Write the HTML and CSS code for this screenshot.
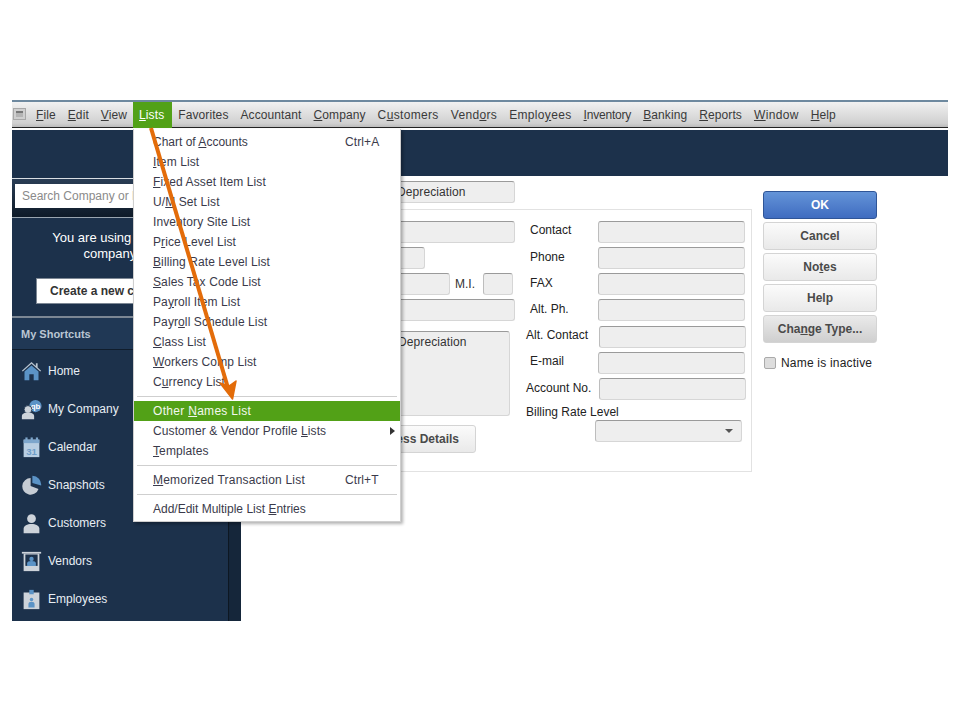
FILE: index.html
```html
<!DOCTYPE html>
<html lang="en">
<head>
<meta charset="utf-8">
<title>Other Names List</title>
<link rel="stylesheet" href="styles.css">
</head>
<body>
<div class="app">
  <div class="menubar">
    <span class="sysicon"><span class="sysicon-inner"></span></span>
    <span class="mi"><u>F</u>ile</span>
    <span class="mi"><u>E</u>dit</span>
    <span class="mi"><u>V</u>iew</span>
    <span class="mi active"><u>L</u>ists</span>
    <span class="mi">Favorites</span>
    <span class="mi">Accountant</span>
    <span class="mi"><u>C</u>ompany</span>
    <span class="mi loose">C<u>u</u>stomers</span>
    <span class="mi loose">Vend<u>o</u>rs</span>
    <span class="mi loose">Emplo<u>y</u>ees</span>
    <span class="mi tight"><u>I</u>nventory</span>
    <span class="mi"><u>B</u>anking</span>
    <span class="mi"><u>R</u>eports</span>
    <span class="mi loose"><u>W</u>indow</span>
    <span class="mi"><u>H</u>elp</span>
  </div>
  <div class="rule"></div>
  <div class="banner"></div>
  <div class="body">
    <aside class="sidebar">
      <div class="searchbar"><div class="search">Search Company or Help</div></div>
      <div class="promo">
        <p class="promo-text">You are using a sample<br>company file</p>
        <div class="promo-btn">Create a new company</div>
      </div>
      <div class="shortcuts-head">My Shortcuts</div>
      <nav class="shortcuts">
        <div class="sc">
          <svg class="ic" viewBox="0 0 24 24"><path d="M1 11 12 1l5 4.600V2.500h2v5l4 3.500-1 1L12 3 2 12z" fill="#b8c4d0"/><path d="M4 12 12 5l8 7v10h-5.500v-7h-5v7H4z" fill="#5b93c6"/></svg>
          <span>Home</span>
        </div>
        <div class="sc">
          <svg class="ic" viewBox="0 0 24 24"><circle cx="16.500" cy="8" r="7" fill="#5b93c6"/><text class="qb" x="16.500" y="11" text-anchor="middle">qb</text><circle cx="8" cy="12" r="4.500" fill="#cdd3da" stroke="#1c314b"/><path d="M1 23v-3.500C1 17 4 15.500 8 15.500s7 1.500 7 4V23z" fill="#cdd3da"/></svg>
          <span>My Company</span>
        </div>
        <div class="sc">
          <svg class="ic" viewBox="0 0 24 24"><rect x="3" y="3" width="18" height="20" fill="#b9cee2"/><rect x="3" y="3" width="18" height="4" fill="#7ea6cc"/><rect x="5" y="0.500" width="2.500" height="5" fill="#7ea6cc"/><rect x="11" y="0.500" width="2.500" height="5" fill="#7ea6cc"/><rect x="17" y="0.500" width="2.500" height="5" fill="#7ea6cc"/><text class="cal" x="12" y="20.500" text-anchor="middle">31</text></svg>
          <span>Calendar</span>
        </div>
        <div class="sc">
          <svg class="ic" viewBox="0 0 24 24"><path d="M11 3.500a9.500 9.500 0 1 0 9 12.500l-9-3.500z" fill="#c6ccd4"/><path d="M13 1a10 10 0 0 1 10 11l-10-3z" fill="#5b93c6"/></svg>
          <span>Snapshots</span>
        </div>
        <div class="sc">
          <svg class="ic" viewBox="0 0 24 24"><circle cx="12" cy="6.500" r="5" fill="#cdd3da"/><path d="M3 23v-5c0-3.500 4-5.500 9-5.500s9 2 9 5.500v5z" fill="#cdd3da"/></svg>
          <span>Customers</span>
        </div>
        <div class="sc">
          <svg class="ic" viewBox="0 0 24 24"><rect x="1" y="1" width="22" height="2" fill="#cdd3da"/><rect x="3" y="3" width="18" height="20" fill="#cdd3da"/><rect x="5" y="4" width="14" height="13" fill="#1c314b"/><circle cx="12" cy="9" r="2.500" fill="#5b93c6"/><path d="M7 17v-3c0-1.500 2-2.500 5-2.500s5 1 5 2.500v3z" fill="#5b93c6"/></svg>
          <span>Vendors</span>
        </div>
        <div class="sc">
          <svg class="ic" viewBox="0 0 24 24"><rect x="3" y="4" width="18" height="19" fill="#cdd3da"/><rect x="9.500" y="1" width="5" height="5" fill="#5b93c6"/><circle cx="12" cy="12" r="2" fill="#5b93c6"/><path d="M8.500 21v-4c0-1.500 1.500-2.500 3.500-2.500s3.500 1 3.500 2.500v4z" fill="#5b93c6"/></svg>
          <span>Employees</span>
        </div>
      </nav>
    </aside>
    <div class="strip"></div>
    <main class="main">
      <div class="form-area">
        <div class="type-field field">Depreciation</div>
        <section class="panel">
          <div class="col-left">
            <div class="field w-full"></div>
            <div class="field w-short"></div>
            <div class="name-row">
              <div class="field w-first"></div>
              <span class="mi-label">M.I.</span>
              <div class="field w-mi"></div>
            </div>
            <div class="field w-full"></div>
            <div class="field address">Depreciation</div>
            <div class="btn addr-btn">Address Details</div>
          </div>
          <div class="col-right">
            <div class="row"><label class="lb indent up">Contact</label><div class="field grow"></div></div>
            <div class="row"><label class="lb indent">Phone</label><div class="field grow"></div></div>
            <div class="row"><label class="lb indent">FAX</label><div class="field grow"></div></div>
            <div class="row"><label class="lb indent">Alt. Ph.</label><div class="field grow"></div></div>
            <div class="row row-alt"><label class="lb wide up">Alt. Contact</label><div class="field grow"></div></div>
            <div class="row row-back"><label class="lb indent up">E-mail</label><div class="field grow"></div></div>
            <div class="row"><label class="lb wide">Account No.</label><div class="field grow"></div></div>
            <div class="rate-label">Billing Rate Level</div>
            <div class="field dropdown"><span class="caret"></span></div>
          </div>
        </section>
      </div>
      <div class="actions">
        <div class="btn primary">OK</div>
        <div class="btn">Cancel</div>
        <div class="btn">No<u>t</u>es</div>
        <div class="btn">Help</div>
        <div class="btn change">Cha<u>n</u>ge Type...</div>
        <div class="inactive"><span class="check"></span>Name is inactive</div>
      </div>
    </main>
  </div>
</div>

<div class="dropmenu">
  <div class="item snug">Chart of <u>A</u>ccounts<span class="key">Ctrl+A</span></div>
  <div class="item"><u>I</u>tem List</div>
  <div class="item"><u>F</u>ixed Asset Item List</div>
  <div class="item">U/<u>M</u> Set List</div>
  <div class="item">Inventory Site List</div>
  <div class="item">P<u>r</u>ice Level List</div>
  <div class="item"><u>B</u>illing Rate Level List</div>
  <div class="item"><u>S</u>ales Tax Code List</div>
  <div class="item">Pa<u>y</u>roll Item List</div>
  <div class="item">Payr<u>o</u>ll Schedule List</div>
  <div class="item"><u>C</u>lass List</div>
  <div class="item"><u>W</u>orkers Comp List</div>
  <div class="item">C<u>u</u>rrency List</div>
  <div class="sep"></div>
  <div class="item hot">Other <u>N</u>ames List</div>
  <div class="item">Customer &amp; Vendor Profile <u>L</u>ists<span class="sub"></span></div>
  <div class="item"><u>T</u>emplates</div>
  <div class="sep"></div>
  <div class="item airy"><u>M</u>emorized Transaction List<span class="key">Ctrl+T</span></div>
  <div class="sep"></div>
  <div class="item snug">Add/Edit Multiple List <u>E</u>ntries</div>
</div>

<svg class="arrow" viewBox="0 0 960 720" aria-hidden="true">
  <path d="M151 128 228 388" fill="none" stroke="#e36c0a" stroke-width="4"/>
  <path d="M220 383 232.500 399 236 381 229 386z" fill="#e36c0a" stroke="#e36c0a" stroke-width="1.500" stroke-linejoin="round"/>
</svg>
</body>
</html>
```
FILE: styles.css
```css
* { box-sizing: border-box; }
html, body { margin: 0; padding: 0; background: #fff; }
body {
  width: 960px;
  height: 720px;
  overflow: hidden;
  position: relative;
  font-family: "Liberation Sans", Arial, sans-serif;
  font-size: 12px;
  color: #333;
}
.app {
  margin: 100px 0 0 12px;
  width: 936px;
  height: 521px;
  display: flex;
  flex-direction: column;
}
.menubar {
  height: 28px;
  flex: none;
  display: flex;
  align-items: flex-start;
  border-top: 2px solid #6e899f;
  border-bottom: 1px solid #222;
  background: linear-gradient(#f1f1f1, #d0d0d0 85%, #bcbcbc);
  padding-left: 18px;
  position: relative;
}
.sysicon {
  position: absolute;
  left: 1px;
  top: 6px;
  width: 13px;
  height: 12px;
  background: #cfcfcf;
  border: 1px solid #a8a8a8;
  padding: 2px;
}
.sysicon-inner { display: block; height: 100%; background: #b4b4b4; border-top: 2px solid #777; }
.mi {
  height: 26px;
  padding: 0 6px;
  line-height: 26px;
  color: #3a3a3a;
  white-space: nowrap;
  letter-spacing: 0.1px;
}
.mi.loose { letter-spacing: 0.34px; }
.mi.tight { letter-spacing: -0.2px; }
.mi.active { background: #52a117; color: #fff; padding-right: 8px; }
.rule { height: 2px; flex: none; background: #fff; }
.banner { height: 46px; flex: none; background: #1c314b; }
.body { flex: 1; display: flex; min-height: 0; }

.sidebar { width: 216px; flex: none; background: #1c314b; display: flex; flex-direction: column; }
.searchbar {
  height: 40px;
  flex: none;
  margin-top: 2px;
  border-top: 1px solid #d8dde2;
  border-bottom: 1px solid #9aa5b0;
  background: linear-gradient(#2a3d55, #0e1a28);
  padding: 5px 0 0 3px;
}
.search {
  width: 130px;
  height: 24px;
  background: #fff;
  color: #8a8a8a;
  line-height: 24px;
  padding-left: 7px;
  white-space: nowrap;
  overflow: hidden;
}
.promo {
  height: 100px;
  flex: none;
  border-bottom: 2px solid #7c8794;
  padding-top: 12px;
  text-align: center;
}
.promo-text { margin: 0; font-size: 13px; line-height: 16px; color: #fff; }
.promo-btn {
  margin: 16px auto 0;
  width: 168px;
  height: 26px;
  background: #fff;
  border: 1px solid #7c8794;
  line-height: 24px;
  font-weight: bold;
  color: #333;
  text-align: left;
  padding-left: 13px;
}
.shortcuts-head {
  height: 32px;
  flex: none;
  background: #203855;
  border-bottom: 1px solid #101d2c;
  color: #b9c6d3;
  font-weight: bold;
  font-size: 11px;
  line-height: 32px;
  padding-left: 9px;
}
.shortcuts { display: flex; flex-direction: column; padding-top: 2px; }
.sc {
  height: 38px;
  display: flex;
  align-items: center;
  gap: 6px;
  padding-left: 9px;
  color: #e8eef4;
}
.ic { width: 21px; height: 21px; flex: none; }
.qb { font: bold 9px "Liberation Sans", sans-serif; fill: #fff; }
.cal { font: bold 11px "Liberation Sans", sans-serif; fill: #6f9dc8; }
.strip { width: 13px; flex: none; background: #15263a; border-left: 1px solid #0d1722; }

.main { flex: 1; display: flex; background: #fff; min-width: 0; }
.form-area { width: 511px; flex: none; padding-top: 5px; display: flex; flex-direction: column; align-items: flex-end; }
.field {
  height: 22px;
  background: #eee;
  border: 1px solid #d6d6d6;
  border-top: 1px solid #9a9a9a;
  border-left-color: #bdbdbd;
  border-radius: 3px;
}
.type-field {
  width: 230px;
  line-height: 20px;
  padding-left: 111px;
  margin-right: 237px;
  color: #333;
  letter-spacing: 0.1px;
}
.panel {
  margin-top: 6px;
  width: 500px;
  height: 263px;
  border: 1px solid #e2e2e2;
  display: flex;
  padding: 11px 0 0 47px;
}
.col-left { width: 226px; flex: none; display: flex; flex-direction: column; gap: 4px; }
.w-full { width: 215px; }
.w-short { width: 125px; }
.w-first { width: 150px; }
.w-mi { width: 30px; }
.name-row { display: flex; align-items: center; }
.mi-label { margin: 0 12px 0 5px; width: 16px; white-space: nowrap; }
.address {
  width: 210px;
  height: 85px;
  margin-top: 6px;
  padding: 2px 0 0 97px;
  line-height: 16px;
  color: #333;
  white-space: nowrap;
  letter-spacing: 0.1px;
}
.addr-btn { width: 176px; height: 27px; margin-top: 5px; align-self: flex-start; }
.col-right { width: 221px; flex: none; display: flex; flex-direction: column; gap: 4px; }
.row { display: flex; align-items: center; height: 22px; }
.row-alt { margin-top: 1px; }
.row-back { margin-left: -1px; }
.lb { flex: none; white-space: nowrap; color: #222; margin-bottom: 2px; }
.up { margin-bottom: 4px; }
.indent { flex-basis: 72px; padding-left: 4px; }
.row-back .indent { padding-left: 5px; flex-basis: 73px; }
.wide { flex-basis: 73px; }
.grow { width: 147px; flex: none; }
.rate-label { height: 16px; line-height: 16px; color: #222; white-space: nowrap; }
.dropdown { width: 147px; margin-left: 69px; margin-top: -4px; display: flex; align-items: center; justify-content: flex-end; padding-right: 8px; }
.caret { width: 0; height: 0; border: 4px solid transparent; border-top: 4px solid #555; border-bottom: 0; }

.btn {
  height: 28px;
  border: 1px solid #d4d4d4;
  border-radius: 3px;
  background: linear-gradient(#fbfbfb, #e9e9e9);
  color: #4a4a4a;
  font-weight: bold;
  text-align: center;
  line-height: 26px;
  white-space: nowrap;
}
.addr-btn { text-align: right; padding-right: 16px; line-height: 26px; }
.actions { margin-left: 11px; width: 114px; padding-top: 15px; display: flex; flex-direction: column; gap: 3px; }
.primary {
  background: linear-gradient(#6494d8, #3f6cc0);
  border-color: #2f5597;
  color: #fff;
}
.change { background: linear-gradient(#eaeaea, #cfcfcf); }
.inactive { display: flex; align-items: center; margin-top: 10px; color: #222; white-space: nowrap; padding-left: 1px; letter-spacing: 0.2px; }
.check {
  width: 12px;
  height: 12px;
  margin-right: 5px;
  background: #ddd;
  border: 1px solid #aaa;
  border-radius: 2px;
}

.dropmenu {
  position: absolute;
  left: 133px;
  top: 129px;
  width: 268px;
  height: 393px;
  background: #fff;
  border: 1px solid #cfcfcf;
  border-top: 0;
  box-shadow: 2px 2px 3px rgba(0, 0, 0, 0.3);
  padding-top: 3px;
}
.item {
  height: 20px;
  line-height: 20px;
  padding-left: 19px;
  position: relative;
  color: #3a3a4a;
  white-space: nowrap;
  letter-spacing: 0.1px;
}
.item.snug { letter-spacing: 0; }
.item.airy { letter-spacing: 0.2px; }
.item.hot { background: #52a117; color: #f3f8ee; letter-spacing: 0.3px; }
.key { position: absolute; left: 211px; top: 0; letter-spacing: 0.1px; }
.sub {
  position: absolute;
  right: 5px;
  top: 6px;
  width: 0;
  height: 0;
  border: 4px solid transparent;
  border-left: 5px solid #333;
  border-right: 0;
}
.sep { height: 1px; margin: 4px 3px; background: #cfcfcf; }
.arrow { position: absolute; left: 0; top: 0; width: 960px; height: 720px; pointer-events: none; }
```
